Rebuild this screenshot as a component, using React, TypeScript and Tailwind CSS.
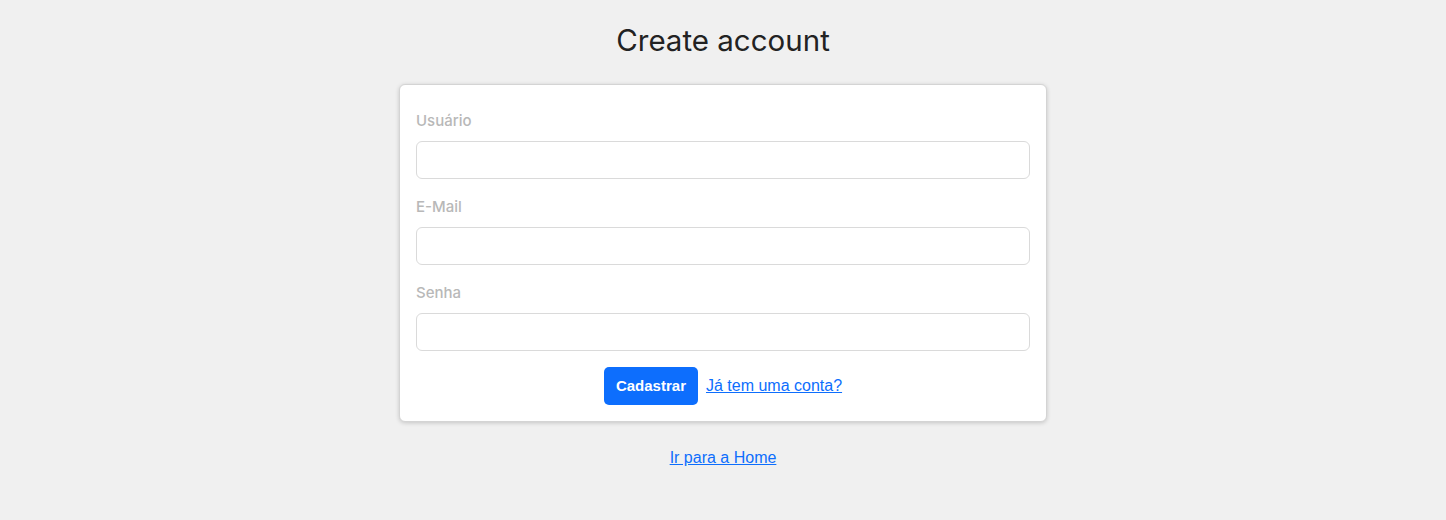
import React from 'react';

const fields = ['Usuário', 'E-Mail', 'Senha'];

export default function App() {
  return (
    <div className="min-h-[520px] w-full bg-[#f0f0f0] pt-[22px] font-['Inter',sans-serif]">
      <h1 className="text-center text-[29.5px] leading-[36px] text-[#222] mb-[26px]">Create account</h1>
      <div className="mx-auto w-[648px] rounded-md border border-[#d4d4d4] bg-white px-4 pt-6 pb-4 shadow-[0_1px_4px_rgba(0,0,0,0.18)]">
        {fields.map((f, i) => (
          <div key={f} className={i > 0 ? 'mt-4' : ''}>
            <label className="block text-[15px] font-medium leading-6 text-[#b8b8b8] mb-2">{f}</label>
            <input
              type={f === 'Senha' ? 'password' : 'text'}
              className="block h-[38px] w-full rounded-md border border-[#dadada] bg-white px-3 outline-none"
            />
          </div>
        ))}
        <div className="mt-4 flex items-center justify-center gap-2 font-['Liberation_Sans',Arial,sans-serif]">
          <button className="h-[38px] rounded-[5px] bg-[#0d6efd] px-[12px] text-[15px] font-bold text-white">
            Cadastrar
          </button>
          <a href="#" className="text-[16px] text-[#0d6efd] underline">Já tem uma conta?</a>
        </div>
      </div>
      <div className="mt-6 text-center font-['Liberation_Sans',Arial,sans-serif] leading-6">
        <a href="#" className="text-[16px] text-[#0d6efd] underline">Ir para a Home</a>
      </div>
    </div>
  );
}
